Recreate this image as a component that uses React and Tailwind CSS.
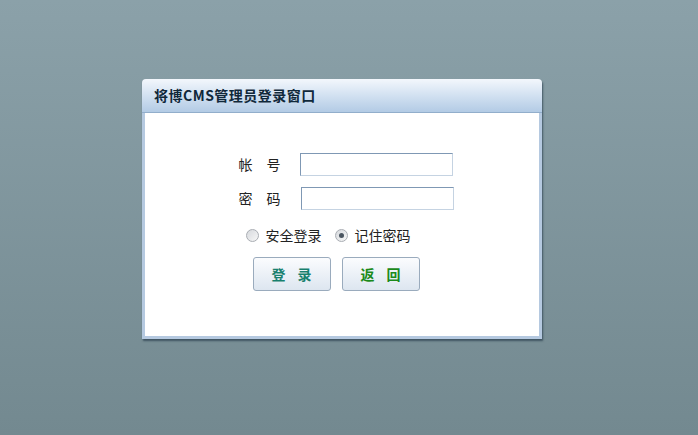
import React, { useState } from "react";

const font = { fontFamily: '"SimSun", "Noto Sans CJK SC", sans-serif' };

function Radio({ checked, label, onClick }) {
  return (
    <label className="flex items-center gap-[7px] cursor-pointer" onClick={onClick}>
      <span className="w-[13px] h-[13px] rounded-full border border-[#a9adb3] bg-gradient-to-br from-[#d6d9dd] to-[#f7f7f7] flex items-center justify-center">
        {checked && <span className="w-[5px] h-[5px] rounded-full bg-[#4a5560]" />}
      </span>
      <span className="text-[14px] text-[#222]">{label}</span>
    </label>
  );
}

export default function App() {
  const [account, setAccount] = useState("");
  const [password, setPassword] = useState("");
  const [remember, setRemember] = useState(true);

  return (
    <div
      className="w-[698px] h-[435px] bg-gradient-to-b from-[#8ba1a9] to-[#738990] pt-[79px] pl-[142px]"
      style={font}
    >
      <div className="w-[400px] shadow-[1px_2px_2px_rgba(40,60,75,0.7)] rounded-t-[4px]">
        <div className="h-[34px] rounded-t-[4px] bg-gradient-to-b from-[#f3f7fc] via-[#d2e1f1] to-[#b3cbe5] border-b border-[#92aecb] flex items-center pl-[12px]">
          <span className="text-[14px] font-bold text-[#10283a] tracking-[0.5px]">将博CMS管理员登录窗口</span>
        </div>
        <div className="bg-white border-x-[3px] border-b-[3px] border-[#b5c9e0] h-[226px] flex flex-col items-center pt-[40px]">
          <div className="flex flex-col gap-[11px] ml-[8px]">
            <div className="flex items-center">
              <span className="w-[61px] text-[14px] text-[#222] tracking-[14px]">帐号</span>
              <input
                value={account}
                onChange={(e) => setAccount(e.target.value)}
                className="w-[153px] h-[23px] outline-none border border-t-[#7f98b4] border-l-[#7f98b4] border-r-[#c5d3e2] border-b-[#c5d3e2] bg-white text-[13px] px-1"
              />
            </div>
            <div className="flex items-center">
              <span className="w-[62px] text-[14px] text-[#222] tracking-[14px]">密码</span>
              <input
                type="password"
                value={password}
                onChange={(e) => setPassword(e.target.value)}
                className="w-[153px] h-[23px] outline-none border border-t-[#7f98b4] border-l-[#7f98b4] border-r-[#c5d3e2] border-b-[#c5d3e2] bg-white text-[13px] px-1"
              />
            </div>
          </div>
          <div className="flex items-center gap-[13px] mt-[15px] mr-[28px]">
            <Radio checked={!remember} label="安全登录" onClick={() => setRemember(false)} />
            <Radio checked={remember} label="记住密码" onClick={() => setRemember(true)} />
          </div>
          <div className="flex gap-[11px] mt-[11px] mr-[12px]">
            <button className="w-[78px] h-[34px] rounded-[3px] border border-[#9aabbd] bg-gradient-to-b from-[#fbfcfe] to-[#dde6f0] text-[14px] font-bold text-[#18806e] tracking-[12px] pl-[12px]">
              登录
            </button>
            <button className="w-[78px] h-[34px] rounded-[3px] border border-[#9aabbd] bg-gradient-to-b from-[#fbfcfe] to-[#dde6f0] text-[14px] font-bold text-[#1b8a1b] tracking-[12px] pl-[12px]">
              返回
            </button>
          </div>
        </div>
      </div>
    </div>
  );
}
